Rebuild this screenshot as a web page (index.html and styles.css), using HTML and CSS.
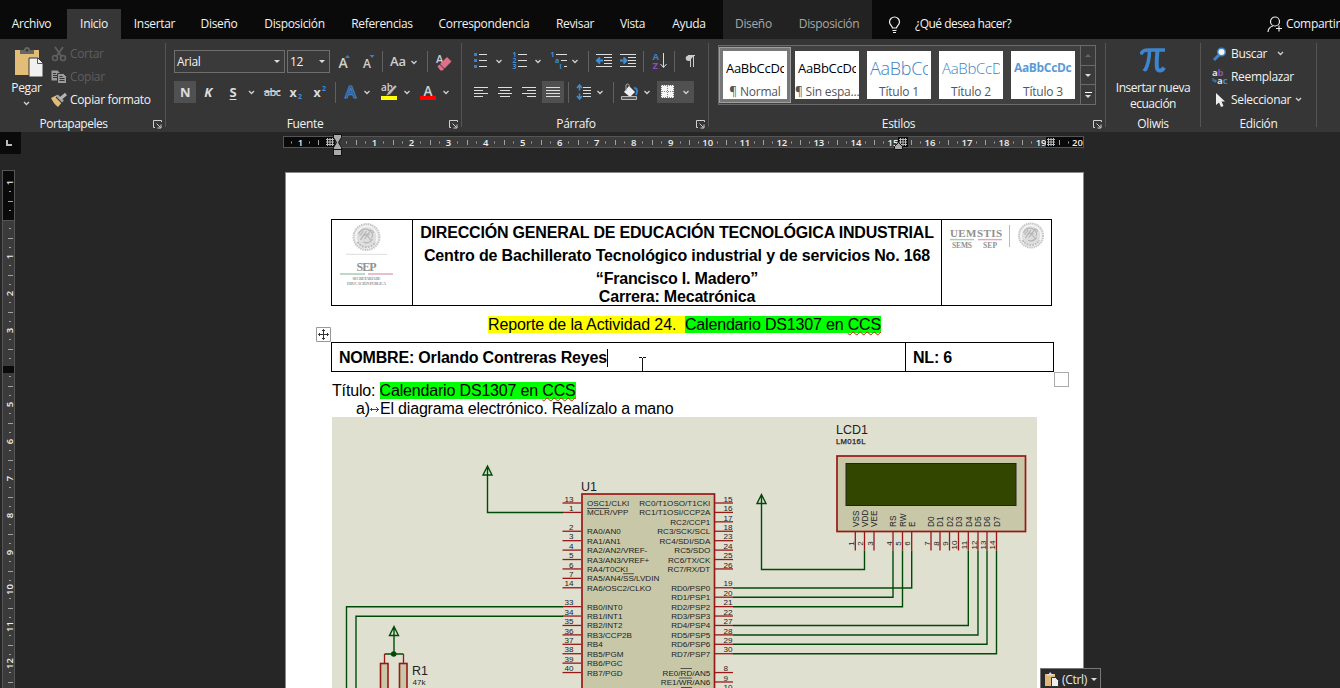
FILE: index.html
```html
<!DOCTYPE html>
<html lang="es">
<head>
<meta charset="utf-8">
<title>Documento</title>
<link rel="stylesheet" href="styles.css">
</head>
<body>
<svg width="0" height="0" class="defs">
  <symbol id="chev" viewBox="0 0 7 5"><path d="M1 1l2.500 2.500L6 1" fill="none" stroke="#d0d0d0" stroke-width="1.300"/></symbol>
  <symbol id="launch" viewBox="0 0 9 9"><path d="M8.500 2V.5H.5v7H2M3.500 3.500l4 4M8 4.500v3.500H4.500" fill="none" stroke="#d0d0d0"/></symbol>
  <symbol id="crest" viewBox="0 0 30 30">
    <circle cx="15" cy="15" r="13" fill="#ececec" stroke="#c6c6c6" stroke-width="2" stroke-dasharray="1.500 .8"/>
    <circle cx="15" cy="15" r="10.500" fill="#dedede" stroke="#fff" stroke-width=".8"/>
    <path d="M7 12c3-6 9-6 11-3 3 1 4 5 2 7M9 18c2-4 5-7 9-5M8 14l4-5M10 16l5-7M13 17l5-7M12 20c4 2 7 0 9-3M16 14l4 5M18 8c3 0 4 2 4 3" fill="none" stroke="#b4b4b4" stroke-width="1.200"/>
    <path d="M6 20c4 7 14 7 18 0" fill="none" stroke="#b8b8b8" stroke-width="1.800" stroke-dasharray="2 1"/>
  </symbol>
</svg>

<header class="tabs">
  <span class="tab first">Archivo</span><span class="tab active">Inicio</span><span class="tab">Insertar</span><span class="tab">Diseño</span><span class="tab">Disposición</span><span class="tab">Referencias</span><span class="tab">Correspondencia</span><span class="tab">Revisar</span><span class="tab">Vista</span><span class="tab ayuda">Ayuda</span>
  <div class="context"><span>Diseño</span><span>Disposición</span></div>
  <div class="tell">
    <svg width="13" height="17" viewBox="0 0 13 17"><path d="M4.500 12c0-2-3-3-3-6a5 5 0 0 1 10 0c0 3-3 4-3 6zM4.500 14.500h4M5 16.500h3" fill="none" stroke="#f0f0f0" stroke-width="1.200"/></svg>
    <span>¿Qué desea hacer?</span>
  </div>
  <div class="share">
    <svg width="16" height="17" viewBox="0 0 16 17"><circle cx="8" cy="5.500" r="4.500" fill="none" stroke="#e8e8e8" stroke-width="1.200"/><path d="M1 16c.3-3.500 2.500-5.500 5-6M12 9.500v6M9 12.500h6" fill="none" stroke="#e8e8e8" stroke-width="1.200"/></svg>
    <span>Compartir</span>
  </div>
</header>

<section class="ribbon">
  <div class="group g-clip">
    <div class="body">
      <div class="paste">
        <svg width="28" height="31" viewBox="0 0 28 31"><path d="M0 3h24v25H0z" fill="#e2bd78"/><path d="M5 7V3h4c0-4 6-4 6 0h4v4z" fill="#666"/><circle cx="12" cy="3.200" r="1.200" fill="#363636"/><path d="M14 11h9l5 5v14H14z" fill="#f0f0f0" stroke="#363636"/><path d="M22.500 11v5.500H28" fill="none" stroke="#555"/></svg>
        <span>Pegar</span>
        <svg width="7" height="5"><use href="#chev"/></svg>
      </div>
      <div class="cliplist">
        <div class="off"><svg width="16" height="16" viewBox="0 0 16 16"><path d="M4 1l7 10M12 1L5 11" stroke="#606060" stroke-width="1.800"/><circle cx="4" cy="12" r="2.500" fill="none" stroke="#606060" stroke-width="1.600"/><circle cx="12" cy="12" r="2.500" fill="none" stroke="#606060" stroke-width="1.600"/></svg><span>Cortar</span></div>
        <div class="off"><svg width="16" height="16" viewBox="0 0 16 16"><path d="M.5 1.500h6l2 2v8h-8z" fill="#9a9a9a"/><path d="M2 4.500h3M2 6.500h4M2 8.500h4" stroke="#363636"/><path d="M6.500 4.500h6l3 3v7h-9z" fill="#9a9a9a" stroke="#363636"/><path d="M8.500 7.500h3M8.500 9.500h5M8.500 11.500h5" stroke="#363636"/></svg><span>Copiar</span></div>
        <div><svg width="16" height="16" viewBox="0 0 16 16"><path d="M0 6l6-3 6 6-5 6c-3-2-5-5-7-9z" fill="#e2bd78"/><path d="M6 4l6 6M9 6l5-4" stroke="#363636" stroke-width="4"/><path d="M6 3.500l6 6" stroke="#a5a5a5" stroke-width="2.500"/><path d="M9 7l6-5" stroke="#b5b5b5" stroke-width="3"/></svg><span>Copiar formato</span></div>
      </div>
    </div>
    <div class="foot"><span>Portapapeles</span><svg width="9" height="9"><use href="#launch"/></svg></div>
  </div>
  <i class="vsep"></i>

  <div class="group g-font">
    <div class="rows">
      <div class="row fr1">
        <div class="box"><span>Arial</span><i class="tri"></i></div><i></i>
        <div class="box"><span>12</span><i class="tri"></i></div>
        <svg width="26" height="22" viewBox="330 50 26 22"><text x="338.500" y="67" class="gl" font-size="14">A</text><path d="M345 57l2.500-3 2.500 3z" fill="#3e7fc4"/></svg>
        <svg width="22" height="22" viewBox="356 50 22 22"><text x="363" y="67" class="gl" font-size="12">A</text><path d="M369.500 54h5l-2.500 3z" fill="#3e7fc4"/></svg>
        <i class="sep"></i>
        <svg width="37" height="22" viewBox="386 50 37 22"><text x="390" y="65" class="gl" font-size="13" textLength="16">Aa</text><use href="#chev" x="410.500" y="59" width="7" height="5"/></svg>
        <i class="sep"></i>
        <svg width="24" height="22" viewBox="431 50 24 22"><text x="436" y="61.500" class="gl" font-size="11">A</text><path d="M440 63l7-7 4.500 4.500-7 7z" fill="#e0708a"/><path d="M437.500 65.500l2-2 4.500 4.500-1.500 1.500h-2z" fill="#e0708a"/></svg>
      </div>
      <div class="row fr2">
        <b class="on">N</b>
        <b class="it">K</b>
        <b class="un">S</b>
        <svg width="7" height="5"><use href="#chev"/></svg>
        <span class="strike">abc</span>
        <svg width="16" height="22" viewBox="288 81 16 22"><text x="289.500" y="96.500" class="gb" font-size="12.500">x</text><text x="298" y="99" class="sm">2</text></svg>
        <svg width="31" height="22" viewBox="304 81 31 22"><text x="313.500" y="96.500" class="gb" font-size="12.500">x</text><text x="322" y="91" class="sm">2</text></svg>
        <i class="line"></i>
        <svg width="36" height="22" viewBox="336 81 36 22"><text x="345" y="98" font-size="17" class="fx">A</text><use href="#chev" x="363.500" y="90" width="7" height="5"/></svg>
        <svg width="40" height="22" viewBox="372 81 40 22"><text x="381" y="91" class="gl" font-size="10" font-weight="bold">ab</text><path d="M386 96l2-4 7-7 2 1.500-7 8z" fill="#bbb" stroke="#363636" stroke-width=".5"/><path d="M381 96h16v4h-16z" fill="#ff0"/><use href="#chev" x="403.500" y="90" width="7" height="5"/></svg>
        <svg width="40" height="22" viewBox="412 81 40 22"><text x="423.500" y="95.500" class="gl" font-size="13.500" font-weight="bold">A</text><path d="M420 96h16v4h-16z" fill="#f00"/><use href="#chev" x="442.500" y="90" width="7" height="5"/></svg>
      </div>
    </div>
    <div class="foot"><span>Fuente</span><svg width="9" height="9"><use href="#launch"/></svg></div>
  </div>
  <i class="vsep"></i>

  <div class="group g-par">
    <div class="rows">
      <div class="row pr1">
        <svg width="39" height="22" viewBox="468 50 39 22"><path d="M474 53h3v3h-3zM474 59h3v3h-3zM474 65h3v3h-3z" fill="#3e7fc4"/><path d="M479 54.500h8M479 60.500h8M479 66.500h8" stroke="#ddd"/><use href="#chev" x="495.500" y="59" width="7" height="5"/></svg>
        <svg width="39" height="22" viewBox="507 50 39 22"><g class="sm"><text x="512.500" y="57">1</text><text x="512.500" y="63">2</text><text x="512.500" y="69">3</text></g><path d="M518 54.500h9M518 60.500h9M518 66.500h9" stroke="#ddd"/><use href="#chev" x="534.500" y="59" width="7" height="5"/></svg>
        <svg width="38" height="22" viewBox="546 50 38 22"><g class="sm"><text x="550.500" y="57">1</text><text x="555" y="63">a</text><text x="559.500" y="69">i</text></g><path d="M556 54.500h11M561 60.500h6M564 66.500h3" stroke="#ddd"/><use href="#chev" x="571.500" y="59" width="7" height="5"/></svg>
        <i class="sep"></i>
        <svg width="24" height="22" viewBox="592 50 24 22"><path d="M596 54.500h16M604 57.500h8M604 60.500h8M604 63.500h8M596 66.500h16" stroke="#ddd"/><path d="M603 60.500h-6M600 57.500l-3 3 3 3" fill="none" stroke="#3e8fd4" stroke-width="2"/></svg>
        <svg width="23" height="22" viewBox="616 50 23 22"><path d="M620 54.500h16M628 57.500h8M628 60.500h8M628 63.500h8M620 66.500h16" stroke="#ddd"/><path d="M620 60.500h6M623.500 57.500l3 3-3 3" fill="none" stroke="#3e8fd4" stroke-width="2"/></svg>
        <i class="sep"></i>
        <svg width="23" height="22" viewBox="647 50 23 22"><text x="652.500" y="60" font-size="9.500" font-weight="bold" fill="#3e7fc4">A</text><text x="652.500" y="68.500" font-size="9.500" font-weight="bold" fill="#8a4fb5">Z</text><path d="M663.500 53v14M660.500 64l3 3.500 3-3.500" fill="none" stroke="#ddd"/></svg>
        <i class="sep"></i>
        <svg width="24" height="22" viewBox="678 50 24 22"><path d="M694 55.500h-5.500a2.700 2.700 0 0 0 0 5.400h1z" fill="#ccc"/><path d="M690.500 55v12M693.500 55v12M688 55.500h7" stroke="#ccc"/></svg>
      </div>
      <div class="row pr2">
        <svg width="24" height="22" viewBox="469 81 24 22"><path d="M474 87.500h14M474 90.500h9M474 93.500h14M474 96.500h9" stroke="#ddd"/></svg>
        <svg width="24" height="22" viewBox="493 81 24 22"><path d="M498 87.500h14M500 90.500h10M498 93.500h14M500 96.500h10" stroke="#ddd"/></svg>
        <svg width="25" height="22" viewBox="517 81 25 22"><path d="M522 87.500h14M527 90.500h9M522 93.500h14M527 96.500h9" stroke="#ddd"/></svg>
        <svg class="on" width="22" height="22" viewBox="542 81 22 22"><path d="M546 87.500h14M546 90.500h14M546 93.500h14M546 96.500h14" stroke="#ddd"/></svg>
        <i class="sep"></i>
        <svg width="37" height="22" viewBox="572 81 37 22"><path d="M583 87.500h8M583 90.500h8M583 93.500h8M583 96.500h8" stroke="#ddd"/><path d="M579.500 85.500v5M577 88l2.500-3 2.500 3M579.500 93.500v5M577 96l2.500 3 2.500-3" fill="none" stroke="#3e8fd4" stroke-width="1.500"/><use href="#chev" x="596.500" y="90" width="7" height="5"/></svg>
        <i class="sep"></i>
        <svg width="40" height="22" viewBox="617 81 40 22"><path d="M629 86l6 6-5 5-6-5z" fill="#f0f0f0"/><path d="M626 91v-6c1-2 4-1 3 2" fill="none" stroke="#aaa"/><path d="M634 88c3 0 4 3 2 7" fill="none" stroke="#3e7fc4" stroke-width="2"/><path d="M621.500 96.500h15v3h-15z" fill="#555" stroke="#bbb"/><use href="#chev" x="643.500" y="90" width="7" height="5"/></svg>
        <svg class="on" width="37" height="22" viewBox="657 81 37 22"><path d="M661 85h13v13h-13z" fill="#f5f5f5"/><path d="M662 91.500h12M667.500 86v12M661 85.500h13M661 97.500h13M661.500 85v13M673.500 85v13" stroke="#888" stroke-dasharray="1 1"/><use href="#chev" x="682.500" y="90" width="7" height="5"/></svg>
      </div>
    </div>
    <div class="foot"><span>Párrafo</span><svg width="9" height="9"><use href="#launch"/></svg></div>
  </div>
  <i class="vsep"></i>

  <div class="group g-sty">
    <div class="gallery">
      <div class="cards">
        <div class="card sel"><span class="s1">AaBbCcDc</span><span class="nm">¶ Normal</span></div>
        <div class="card"><span class="s1">AaBbCcDc</span><span class="nm">¶ Sin espa...</span></div>
        <div class="card"><span class="s2">AaBbCc</span><span class="nm">Título 1</span></div>
        <div class="card"><span class="s3">AaBbCcD</span><span class="nm">Título 2</span></div>
        <div class="card"><span class="s4">AaBbCcDc</span><span class="nm">Título 3</span></div>
      </div>
      <div class="scroll"><span><i class="up"></i></span><span><i class="tri"></i></span><span><i class="bar"></i><i class="tri"></i></span></div>
    </div>
    <div class="foot"><span>Estilos</span><svg width="9" height="9"><use href="#launch"/></svg></div>
  </div>
  <i class="vsep"></i>

  <div class="group g-eq">
    <div class="eq">
      <svg width="26" height="25" viewBox="0 0 26 25"><path d="M1 6.500C2 2.500 4.500 2 8 2H25" fill="none" stroke="#3e86cc" stroke-width="3.600"/><path d="M9.500 2c0 9-1 14-4.500 20.500" fill="none" stroke="#3e86cc" stroke-width="3.600"/><path d="M3 21.500c1 2 3 2 4 0z" fill="#3e86cc" stroke="#3e86cc"/><path d="M17.500 2c-.8 9-1.300 14-.5 18 .8 3.500 5 3.500 7-.5" fill="none" stroke="#3e86cc" stroke-width="4"/></svg>
      <span>Insertar nueva<br>ecuación</span>
    </div>
    <div class="foot"><span>Oliwis</span></div>
  </div>
  <i class="vsep"></i>

  <div class="group g-ed">
    <div class="edlist">
      <div><svg width="16" height="16" viewBox="0 0 16 16"><path d="M2 14l5-5" stroke="#3e86cc" stroke-width="3"/><circle cx="9.500" cy="6" r="3.800" fill="#f4f4f4" stroke="#3e86cc" stroke-width="1.500"/></svg><span>Buscar</span><svg class="c1" width="7" height="5"><use href="#chev"/></svg></div>
      <div><svg width="16" height="16" viewBox="0 0 16 16"><text x="0" y="7" font-size="9.500" font-weight="bold" fill="#ddd">a</text><text x="5.500" y="7" font-size="9.500" font-weight="bold" fill="#8a4fb5">b</text><text x="5" y="15" font-size="9.500" font-weight="bold" fill="#ddd">a</text><text x="10.700" y="15" font-size="9.500" font-weight="bold" fill="#3e86cc">c</text><path d="M1 9v3h3M2.500 10.500L4.500 12l-2 1.500" fill="none" stroke="#3e86cc"/></svg><span>Reemplazar</span></div>
      <div><svg width="16" height="16" viewBox="0 0 16 16"><path d="M4 1v12l3-2.500 2 4.500 2.500-1-2-4.500H13z" fill="#eee"/></svg><span>Seleccionar</span><svg class="c2" width="7" height="5"><use href="#chev"/></svg></div>
    </div>
    <div class="foot"><span>Edición</span></div>
  </div>
  <i class="vsep"></i>
</section>

<main class="work">
  <div class="corner"><i></i></div>
  <svg id="hr" class="hruler" width="804" height="24" viewBox="282 133 804 24"></svg>
  <svg id="vr" class="vruler" width="14" height="519" viewBox="2 169 14 519"></svg>

  <article class="page">
    <div class="head">
      <div class="logo1">
        <svg width="80" height="84" viewBox="332 220 80 84"><use href="#crest" x="351.500" y="222" width="30" height="30"/><path d="M346 254.300h41" stroke="#ddd"/><text x="366.500" y="271" text-anchor="middle" class="ser" font-size="12" textLength="20">SEP</text><path d="M340 274h25" stroke="#9cc9b4" stroke-width="1.400"/><path d="M368 274h25" stroke="#dfa3b2" stroke-width="1.400"/><text x="366.500" y="280" text-anchor="middle" class="tiny" textLength="28">SECRETARÍA DE</text><text x="366.500" y="284.500" text-anchor="middle" class="tiny" textLength="39">EDUCACIÓN PÚBLICA</text></svg>
      </div>
      <div class="title"><p>DIRECCIÓN GENERAL DE EDUCACIÓN TECNOLÓGICA INDUSTRIAL</p><p class="l2">Centro de Bachillerato Tecnológico industrial y de servicios No. 168</p><p>“Francisco I. Madero”</p><p class="last">Carrera: Mecatrónica</p></div>
      <div class="logo2">
        <svg width="109" height="40" viewBox="942 220 109 40"><text x="950" y="237" class="ser" font-size="11" textLength="52">UEMSTIS</text><path d="M950 239.600h24" stroke="#9cd0b8" stroke-width="1.400"/><path d="M978 239.600h24" stroke="#ec9fb5" stroke-width="1.400"/><text x="952" y="248" class="ser" font-size="7.500" textLength="20">SEMS</text><text x="983" y="248" class="ser" font-size="7.500" textLength="14">SEP</text><path d="M1009.500 225v22" stroke="#bbb"/><use href="#crest" x="1017" y="221.500" width="28" height="28"/></svg>
      </div>
    </div>
    <p class="report"><span class="y">Reporte de la Actividad 24.&nbsp;&nbsp;</span><span class="g">Calendario DS1307 en <span class="sq">CCS</span></span></p>
    <div class="name"><div><span>NOMBRE: Orlando Contreras Reyes</span><i class="caret"></i></div><div><span>NL: 6</span></div></div>
    <p class="tit">Título: <span class="g">Calendario DS1307 en <span class="sq">CCS</span></span></p>
    <p class="item"><span>a)</span><svg width="10" height="9" viewBox="0 0 10 9"><path d="M0 4.500h9M6 2l2.500 2.500L6 7M1.500 3v3" fill="none" stroke="#333" stroke-width=".9"/></svg><span>El diagrama electrónico. Realízalo a mano</span></p>
    <svg id="circuit" class="circuit" width="705" height="271" viewBox="332 417 705 271"></svg>
    <svg class="handle" width="15" height="15" viewBox="0 0 15 15"><path d="M.5.5h14v14H.5z" fill="#fff" stroke="#999"/><path d="M7.500 2.500v10M2.500 7.500h10M6 4l1.500-1.500L9 4M6 11l1.500 1.500L9 11M4 6L2.500 7.500 4 9M11 6l1.500 1.500L11 9" fill="none" stroke="#333"/></svg>
    <i class="resize"></i>
    <svg class="ibeam" width="7" height="15" viewBox="0 0 7 15"><path d="M0 .5h3M4 .5h3M3.500 1v13M0 14.500h3M4 14.500h3" stroke="#111"/></svg>
    <div class="ctrl"><svg width="17" height="15" viewBox="0 0 17 15"><path d="M1 2h10v12H1z" fill="#e0b878"/><path d="M3 3.500V2h2c0-2 2.500-2 2.500 0h2v1.500z" fill="#ddd"/><path d="M7.500 5.500h4l3 3v6h-7z" fill="#eee" stroke="#333"/></svg><span>(Ctrl)</span><i class="tri"></i></div>
  </article>
</main>
<script src="app.js"></script>
</body>
</html>
```
FILE: styles.css
```css
* { box-sizing: border-box; }
body { margin: 0; width: 1340px; height: 688px; overflow: hidden; display: flex; flex-direction: column; background: #262626; color: #f2f2f2; font: 12px/16px "Open Sans", "Noto Sans", sans-serif; letter-spacing: -.33px; }
svg { display: block; flex: none; }
svg text { letter-spacing: 0; }
i { font-style: normal; display: block; }
p { margin: 0; }
.defs { position: absolute; }
span { white-space: nowrap; }

.tabs { height: 39px; flex: none; background: #0a0a0a; display: grid; grid-template-columns: 67px 54px 67px 62px 89px 86px 118px 64px 51px 65px 149px 395px 73px; }
.tab { padding-top: 16px; text-align: center; }
.tab.first { padding-right: 4px; }
.tab.ayuda { padding-right: 3px; }
.tab.active { background: #363636; margin-top: 9px; padding-top: 7px; }
.context { background: #222; display: flex; gap: 27px; padding: 16px 0 0 12px; color: #a8a8a8; }
.tell { display: flex; gap: 14px; padding: 16px 0 0 16px; }
.tell span { letter-spacing: -.5px; }
.share { display: flex; gap: 3px; padding: 16px 0 0; }

.ribbon { height: 93px; flex: none; background: #363636; display: flex; }
.vsep { width: 1px; height: 84px; margin-top: 4px; background: #555; flex: none; }
.group { display: flex; flex-direction: column; height: 93px; flex: none; }
.g-clip { width: 165px; } .g-font { width: 295px; } .g-par { width: 246px; } .g-sty { width: 396px; } .g-eq { width: 94px; } .g-ed { width: 115px; }
.foot { margin-top: auto; height: 17px; padding-top: 1px; display: grid; grid-template-columns: 1fr 9px; align-items: center; justify-items: center; padding-right: 3px; }
.g-clip .foot span { margin-right: 6px; letter-spacing: -.5px; }
.g-font .foot span { margin-right: 5px; } .g-par .foot span { margin-right: 6px; } .g-sty .foot span { margin-right: 5px; }
.g-eq .foot, .g-ed .foot { grid-template-columns: 1fr; padding-right: 0; }
.body { display: flex; }
.paste { width: 53px; height: 76px; display: flex; flex-direction: column; align-items: center; padding-top: 8px; }
.paste svg:first-child { margin-left: 4px; }
.paste span { margin-top: 2px; }
.paste svg:last-child { margin-top: 5px; }
.cliplist { padding-top: 3px; margin-left: -2px; }
.cliplist div, .edlist div { display: flex; align-items: center; height: 23px; }
.cliplist span { margin-left: 3px; }
.off { color: #5e5e5e; }

.rows { padding-top: 11px; }
.row { display: grid; height: 22px; align-items: center; justify-items: center; margin-bottom: 9px; }
.fr1 { margin-left: 8px; grid-template-columns: 111px 2px 43px 26px 22px 8px 37px 8px 24px; }
.fr2 { margin-left: 8px; grid-template-columns: 22px 24px 26px 10px 32px 16px 31px 1px 36px 40px 40px; }
.pr1 { margin-left: 6px; grid-template-columns: 39px 39px 38px 8px 24px 23px 8px 23px 8px 24px; }
.pr2 { margin-left: 7px; grid-template-columns: 24px 24px 25px 22px 8px 37px 8px 40px 37px; }
.sep, .line { width: 1px; height: 21px; background: #606060; }
.box { width: 100%; height: 23px; border: 1px solid #6e6e6e; background: #3a3a3a; display: flex; justify-content: space-between; align-items: center; padding: 0 4px 0 2px; }
.tri { width: 0; height: 0; border: 3px solid transparent; border-top: 3px solid #ddd; border-bottom: 0; }
.row b { font-size: 13px; color: #ddd; }
.on { background: #505050; }
.row b.on { width: 22px; height: 22px; text-align: center; line-height: 22px; }
.it { font-style: italic; }
.un { text-decoration: underline; text-underline-offset: 2px; }
.strike { font-weight: 600; font-size: 11px; color: #ccc; letter-spacing: -.8px; text-decoration: line-through; }
.gl { fill: #d0d0d0; font-family: "Open Sans"; font-weight: 600; }
.gb { fill: #ddd; font-family: "Open Sans"; font-weight: 700; }
.sm { fill: #3e8fd4; font-size: 7px; font-weight: 700; }
.fx { fill: #303a48; stroke: #3e7fc4; stroke-width: 1.2; font-weight: 600; }

.gallery { margin: 6px 0 0 9px; width: 378px; height: 60px; border: 1px solid #6a6a6a; background: #404040; display: flex; }
.cards { display: flex; gap: 8px; padding: 5px 4px; width: 361px; }
.card { width: 64px; height: 48px; background: #fff; overflow: hidden; text-align: center; display: flex; flex-direction: column; }
.card.sel { outline: 3px solid #777; box-shadow: 0 0 0 4px #a0a0a0; }
.card span { display: block; height: 16px; }
.card span:first-child { margin: 9px 3px 8px; width: 58px; overflow: hidden; text-align: left; }
.card .nm { color: #555; line-height: 18px; letter-spacing: -.2px; }
.s1 { color: #000; font-size: 13px; letter-spacing: -.3px; }
.s2 { color: #3e7fc4; font-size: 18px; font-weight: 300; letter-spacing: -.3px; }
.s3 { color: #3e7fc4; font-size: 15px; font-weight: 300; letter-spacing: -.3px; }
.s4 { color: #5b9bd5; font-size: 12px; font-weight: 700; }
.scroll { width: 15px; border-left: 1px solid #6a6a6a; display: flex; flex-direction: column; }
.scroll span { flex: 1; display: flex; flex-direction: column; align-items: center; justify-content: center; gap: 2px; background: #3a3a3a; }
.scroll span + span { border-top: 1px solid #6a6a6a; }
.up { border: 3px solid transparent; border-bottom-color: #666; border-top: 0; }
.bar { width: 7px; height: 1px; background: #fff; }

.eq { display: flex; flex-direction: column; align-items: center; padding-top: 9px; text-align: center; gap: 7px; }
.eq span { letter-spacing: -.48px; }
.edlist { padding: 3px 0 0 11px; }
.edlist span { margin-left: 3px; }
.c1 { margin-left: 10px; } .c2 { margin-left: 4px; }

.work { flex: 1; display: grid; grid-template-columns: 282px 1058px; grid-template-rows: 24px 532px; position: relative; }
.corner { width: 21px; height: 22px; background: #0a0a0a; padding: 8px 0 0 6px; }
.corner i { width: 6px; height: 6px; border-left: 2px solid #bbb; border-bottom: 2px solid #bbb; }
.hruler { margin-top: 1px; }
.vruler { margin: 13px 0 0 2px; }
.rn { fill: #f0f0f0; font: 600 9.5px "Open Sans", sans-serif; text-anchor: middle; }
.page { margin: 16px 0 0 3px; width: 799px; height: 516px; background: #fff; border: 1px solid #8a8a8a; border-bottom: 0; color: #000; position: relative; font: 16px/18px "Liberation Sans", Arial, sans-serif; letter-spacing: -.17px; padding-left: 45px; }
.head { margin-top: 46px; width: 721px; height: 87px; border: 1px solid #000; display: grid; grid-template-columns: 80px 530px 109px; }
.title { border: solid #000; border-width: 0 1px; font-weight: 700; text-align: center; padding-top: 4px; white-space: nowrap; letter-spacing: -.19px; }
.title p { height: 23px; }
.title .l2 { letter-spacing: -.15px; }
.title .last { height: 18px; margin-top: -5px; }
.ser { fill: #909090; font-family: "Liberation Serif"; font-weight: 700; }
.tiny { fill: #999; font: 700 4.2px "Liberation Serif"; }
.report { margin: 10px 0 0 157px; }
.y { background: #ff0; letter-spacing: -.11px; } .g { background: #0f0; }
.sq { text-decoration: underline wavy #d02020 1px; text-underline-offset: 1px; text-decoration-skip-ink: none; }
.name { margin-top: 8px; width: 723px; height: 30px; border: 1px solid #000; display: grid; grid-template-columns: 573px 148px; font-weight: 700; letter-spacing: -.19px; }
.name div { display: flex; align-items: center; padding: 1px 0 0 7px; }
.name div + div { border-left: 1px solid #000; }
.caret { width: 1px; height: 18px; background: #000; }
.tit { margin: 10px 0 0 1px; }
.item { margin-left: 25px; display: flex; align-items: center; height: 18px; }
.circuit { margin: -1px 0 0 1px; background: #e0e0d1; font-family: "Liberation Sans", Arial, sans-serif; }
.circuit text { fill: #222; }
.handle { position: absolute; left: 30px; top: 154px; }
.resize { position: absolute; left: 768px; top: 199px; width: 15px; height: 15px; border: 1px solid #aaa; background: #fff; }
.ibeam { position: absolute; left: 353px; top: 184px; }
.ctrl { position: absolute; left: 754px; top: 495px; width: 61px; height: 22px; background: #2b2b2b; border: 1px solid #777; color: #e8e8e8; font: 12px/16px "Open Sans", sans-serif; display: flex; align-items: center; gap: 4px; padding-left: 3px; }
.ctrl span { margin-left: -3px; padding-top: 1px; letter-spacing: -.3px; }
```
FILE: app.js
```js
const line = (x1, y1, x2, y2, c, w = 1) =>
  `<path d="M${x1} ${y1}L${x2} ${y2}" stroke="${c}" stroke-width="${w}" fill="none"/>`;
const rect = (x, y, w, h, f, s = 'none') =>
  `<rect x="${x}" y="${y}" width="${w}" height="${h}" fill="${f}" stroke="${s}"/>`;

function hatch(x, y) {
  let s = rect(x - 1, y - 1, 10, 10, '#0a0a0a');
  for (let i = 0; i < 3; i++) {
    s += line(x + 1.5 + i * 2.5, y, x + 1.5 + i * 2.5, y + 8, '#bbb');
    s += line(x, y + 1.5 + i * 2.5, x + 8, y + 1.5 + i * 2.5, '#bbb');
  }
  return s;
}

/* Horizontal ruler, centimetres measured from the left margin */
function drawHorizontal() {
  const zero = 337.5, cm = 37.03;
  let s = rect(283.5, 136.5, 800, 11, '#3b3b3b', '#555') + rect(284, 137, 50, 10, '#0a0a0a') + rect(1046, 137, 37, 10, '#0a0a0a');
  for (let q = -5; q < 80; q++) {
    const x = Math.floor(zero + q * cm / 4) + .5;
    if (q === 0 || q === -1 || q === 61) continue;
    if (q % 4 === 0) s += `<text class="rn" x="${zero + q * cm / 4}" y="145.500">${Math.abs(q / 4)}</text>`;
    else if (q % 2 === 0) s += line(x, 140, x, 145, '#a0a0a0');
    else if (q !== 77) s += line(x, 141.5, x, 143.5, '#a0a0a0');
  }
  s += hatch(326, 138) + hatch(899, 138) + hatch(1047, 138);
  s += '<path d="M333.500 134.500h8v3l-3 5 3 5v8h-8v-8l3-5-3-5z" fill="#aaa" stroke="#111"/>' + line(333, 149.5, 342, 149.5, '#111');
  s += '<path d="M894.500 149.500v-3l4-4 4 4v3z" fill="#aaa" stroke="#111"/>';
  s += `<text class="rn" x="1077.500" y="145.500">20</text>`;
  document.getElementById('hr').innerHTML = s;
}

/* Vertical ruler */
function drawVertical() {
  const zero = 219, cm = 37;
  let s = rect(2.5, 170.5, 12, 530, '#3b3b3b', '#555') + rect(3, 171, 11, 49, '#0a0a0a') + line(2, 220.5, 15, 220.5, '#555');
  for (let q = -5; q < 51; q++) {
    const y = Math.round(zero + q * cm / 4) + .5;
    if (q === 0 || q === 16 || q === -5) continue;
    if (q % 4 === 0) s += `<text class="rn" transform="translate(13 ${zero + q * cm / 4 + .5}) rotate(-90)">${Math.abs(q / 4)}</text>`;
    else if (q % 2 === 0) s += line(8, y, 13, y, '#a0a0a0');
    else s += line(9, y, 11, y, '#a0a0a0');
  }
  s += rect(3, 366, 11, 7, '#0a0a0a');
  document.getElementById('vr').innerHTML = s;
}

/* Schematic: microcontroller, LCD module and pull-up resistors */
function drawCircuit() {
  const red = '#981818', green = '#004a08', body = '#c8c8a9', pitch = 9.42, top = 503;
  const text = (x, y, t, size = 8.1, anchor = 'start') =>
    `<text x="${x}" y="${y}" font-size="${size}" text-anchor="${anchor}">${t}</text>`;
  const wire = d => `<path d="${d}" fill="none" stroke="${green}" stroke-width="1.400"/>`;
  const power = (x, y) => wire(`M${x} ${y}l-4.500 9h9zM${x} ${y}v9`);
  const left = [[13, 'OSC1/CLKI', 0], [1, 'MCLR/VPP', 1], [2, 'RA0/AN0', 3], [3, 'RA1/AN1', 4], [4, 'RA2/AN2/VREF-', 5], [5, 'RA3/AN3/VREF+', 6], [6, 'RA4/T0CKI', 7], [7, 'RA5/AN4/SS/LVDIN', 8], [14, 'RA6/OSC2/CLKO', 9], [33, 'RB0/INT0', 11], [34, 'RB1/INT1', 12], [35, 'RB2/INT2', 13], [36, 'RB3/CCP2B', 14], [37, 'RB4', 15], [38, 'RB5/PGM', 16], [39, 'RB6/PGC', 17], [40, 'RB7/PGD', 18]];
  const right = [[15, 'RC0/T1OSO/T1CKI', 0], [16, 'RC1/T1OSI/CCP2A', 1], [17, 'RC2/CCP1', 2], [18, 'RC3/SCK/SCL', 3], [23, 'RC4/SDI/SDA', 4], [24, 'RC5/SDO', 5], [25, 'RC6/TX/CK', 6], [26, 'RC7/RX/DT', 7], [19, 'RD0/PSP0', 9], [20, 'RD1/PSP1', 10], [21, 'RD2/PSP2', 11], [22, 'RD3/PSP3', 12], [27, 'RD4/PSP4', 13], [28, 'RD5/PSP5', 14], [29, 'RD6/PSP6', 15], [30, 'RD7/PSP7', 16], [8, 'RE0/RD/AN5', 18], [9, 'RE1/WR/AN6', 19], [10, 'RE2/CS/AN7', 20]];
  let s = `<rect x="582" y="494" width="132.500" height="220" fill="${body}" stroke="${red}" stroke-width="1.700"/>`;
  for (const [n, label, row] of left) {
    const y = top + row * pitch;
    s += line(562.5, y, 581, y, red, 1.3) + text(573.5, y - 1.3, n, 8.1, 'end') + text(587, y + 3, label);
  }
  for (const [n, label, row] of right) {
    const y = top + row * pitch;
    s += line(715, y, 733, y, red, 1.3) + text(723.5, y - 1.3, n) + text(710.3, y + 3, label, 8.1, 'end');
  }
  s += line(587, 508.5, 609, 508.5, '#333', .8) + line(623, 573.7, 634, 573.7, '#333', .8) + line(680.5, 668.5, 692, 668.5, '#333', .8) + line(679, 678, 692, 678, '#333', .8) + line(681, 687.5, 692, 687.5, '#333', .8);
  s += text(581, 491, 'U1', 12.5) + text(836, 433.5, 'LCD1', 12.5) + `<text x="836" y="444" font-size="7.700" stroke="#222" stroke-width=".25" textLength="29.500">LM016L</text>`;

  s += `<rect x="837" y="456" width="188.500" height="75.500" fill="${body}" stroke="${red}" stroke-width="1.700"/><rect x="846" y="463.500" width="170" height="42" fill="#324600" stroke="#222"/>`;
  const pins = [[855.3, 'VSS'], [864.5, 'VDD'], [874, 'VEE'], [893, 'RS'], [902.5, 'RW'], [911.7, 'E'], [931, 'D0'], [940, 'D1'], [949.5, 'D2'], [958.5, 'D3'], [968.3, 'D4'], [978, 'D5'], [987, 'D6'], [996.5, 'D7']];
  pins.forEach(([x, label], i) => {
    s += line(x, 532, x, 550.5, red, 1.3);
    s += `<text transform="translate(${x + 3.2} 527) rotate(-90)" font-size="8.200">${label}</text>`;
    s += `<text transform="translate(${x - 1.3} ${i > 8 ? 545 : 543.5}) rotate(-90)" font-size="8" text-anchor="middle">${i + 1}</text>`;
  });

  s += power(487.5, 466) + wire('M487.500 475V512.500H563') + power(761.5, 494.5) + wire('M761.500 503V569.500H864.500V550.500');
  for (const [y, x] of [[588, 911.7], [597.3, 893], [606.7, 902.5], [625.5, 968.3], [635, 978], [644.3, 987], [653.7, 996.5]])
    s += wire(`M733 ${y}H${x}V550.500`);
  s += wire('M563 606.700H346.500V690') + wire('M563 616.300H356V690');
  s += power(394, 626.5) + wire('M394 635V654M384.500 654H403.500') + `<circle cx="393.700" cy="654" r="2.800" fill="${green}"/>`;
  for (const x of [380.5, 399.5])
    s += line(x + 4, 654, x + 4, 663, red, 1.3) + `<rect x="${x}" y="663.500" width="7.500" height="40" fill="${body}" stroke="${red}" stroke-width="1.600"/>`;
  s += text(412, 674.5, 'R1', 12.5) + text(412.5, 684.5, '47k', 8.1);
  document.getElementById('circuit').innerHTML = s;
}

drawHorizontal();
drawVertical();
drawCircuit();
```
